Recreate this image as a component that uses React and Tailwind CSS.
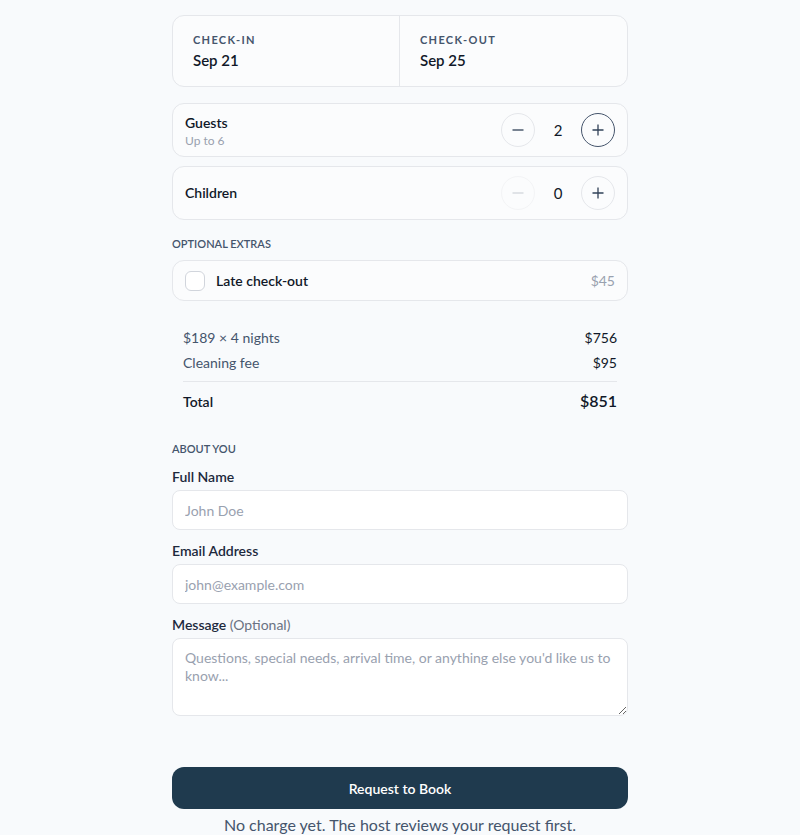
import React from "react";

function Stepper({ value, canDec, active }) {
  return (
    <div className="flex items-center">
      <button
        className={`w-[34px] h-[34px] rounded-full border flex items-center justify-center ${
          canDec ? "border-gray-200 text-slate-700" : "border-gray-100 text-gray-300"
        }`}
      >
        <svg width="14" height="14" viewBox="0 0 14 14" fill="none" stroke="currentColor" strokeWidth="1.3">
          <path d="M1.5 7h11" />
        </svg>
      </button>
      <span className="w-[46px] text-center text-[15px] text-gray-900">{value}</span>
      <button
        className={`w-[34px] h-[34px] rounded-full border flex items-center justify-center text-slate-700 ${
          active ? "border-slate-600" : "border-gray-200"
        }`}
      >
        <svg width="14" height="14" viewBox="0 0 14 14" fill="none" stroke="currentColor" strokeWidth="1.3">
          <path d="M1.5 7h11M7 1.5v11" />
        </svg>
      </button>
    </div>
  );
}

export default function App() {
  return (
    <div
      className="min-h-screen bg-[#f8fafc] text-gray-900"
      style={{ fontFamily: 'Lato, "Noto Sans", sans-serif' }}
    >
      <div className="w-[456px] mx-auto pt-[15px] pb-4">
        {/* Dates */}
        <div className="grid grid-cols-2 rounded-xl border border-gray-200 bg-[#fbfcfd] h-[72px]">
          <div className="px-5 pt-[16px] border-r border-gray-200">
            <div className="text-[11px] font-bold tracking-[0.12em] text-slate-600 leading-4">CHECK-IN</div>
            <div className="text-[15px] font-semibold leading-5 mt-[2px]">Sep 21</div>
          </div>
          <div className="px-5 pt-[16px]">
            <div className="text-[11px] font-bold tracking-[0.12em] text-slate-600 leading-4">CHECK-OUT</div>
            <div className="text-[15px] font-semibold leading-5 mt-[2px]">Sep 25</div>
          </div>
        </div>

        {/* Guests */}
        <div className="mt-4 flex items-center justify-between rounded-xl border border-gray-200 bg-[#fbfcfd] h-[54px] px-3">
          <div className="pt-[2px]">
            <div className="text-[14px] font-semibold leading-5">Guests</div>
            <div className="text-[12px] text-gray-400 leading-4">Up to 6</div>
          </div>
          <Stepper value={2} canDec active />
        </div>

        {/* Children */}
        <div className="mt-[9px] flex items-center justify-between rounded-xl border border-gray-200 bg-[#fbfcfd] h-[54px] px-3">
          <div className="text-[14px] font-semibold leading-5">Children</div>
          <Stepper value={0} canDec={false} />
        </div>

        {/* Extras */}
        <div className="mt-4 text-[11px] font-semibold text-slate-600 leading-4">OPTIONAL EXTRAS</div>
        <div className="mt-2 flex items-center justify-between rounded-xl border border-gray-200 bg-[#fbfcfd] h-[41px] px-3">
          <div className="flex items-center gap-[11px]">
            <span className="w-[20px] h-[20px] rounded-md border border-gray-300 bg-white"></span>
            <span className="text-[14px] font-semibold">Late check-out</span>
          </div>
          <span className="text-[14px] text-gray-400">$45</span>
        </div>

        {/* Price breakdown */}
        <div className="mt-[27px] px-[11px] text-[14px]">
          <div className="flex justify-between leading-5 text-slate-600">
            <span>$189 × 4 nights</span>
            <span className="text-gray-900">$756</span>
          </div>
          <div className="flex justify-between leading-5 text-slate-600 mt-[5px]">
            <span>Cleaning fee</span>
            <span className="text-gray-900">$95</span>
          </div>
          <div className="border-t border-gray-200 mt-[8px]"></div>
          <div className="flex justify-between items-center mt-[7px] h-6">
            <span className="font-semibold">Total</span>
            <span className="text-[16px] font-semibold">$851</span>
          </div>
        </div>

        {/* About you */}
        <div className="mt-[28px] text-[11px] font-semibold text-slate-600 leading-4">ABOUT YOU</div>
        <label className="block mt-[10px] text-[14px] font-semibold text-slate-800 leading-5">Full Name</label>
        <input
          className="mt-[3px] w-full h-[40px] rounded-lg border border-gray-200 bg-white px-3 text-[14px] placeholder:text-gray-400 outline-none"
          placeholder="John Doe"
        />
        <label className="block mt-[11px] text-[14px] font-semibold text-slate-800 leading-5">Email Address</label>
        <input
          className="mt-[3px] w-full h-[40px] rounded-lg border border-gray-200 bg-white px-3 text-[14px] placeholder:text-gray-400 outline-none"
          placeholder="john@example.com"
        />
        <label className="block mt-[11px] text-[14px] font-semibold text-slate-800 leading-5">
          Message <span className="font-normal text-gray-500">(Optional)</span>
        </label>
        <textarea
          className="block mt-[3px] w-full h-[78px] rounded-lg border border-gray-200 bg-white px-3 py-[10px] text-[14px] leading-[18px] placeholder:text-gray-400 outline-none"
          placeholder="Questions, special needs, arrival time, or anything else you'd like us to know..."
        />

        <button className="mt-[51px] w-full h-[42px] rounded-xl bg-[#1f3a4e] text-white text-[14px] font-semibold">
          Request to Book
        </button>
        <p className="mt-[6px] text-center text-[16px] text-slate-600 leading-5">
          No charge yet. The host reviews your request first.
        </p>
      </div>
    </div>
  );
}
